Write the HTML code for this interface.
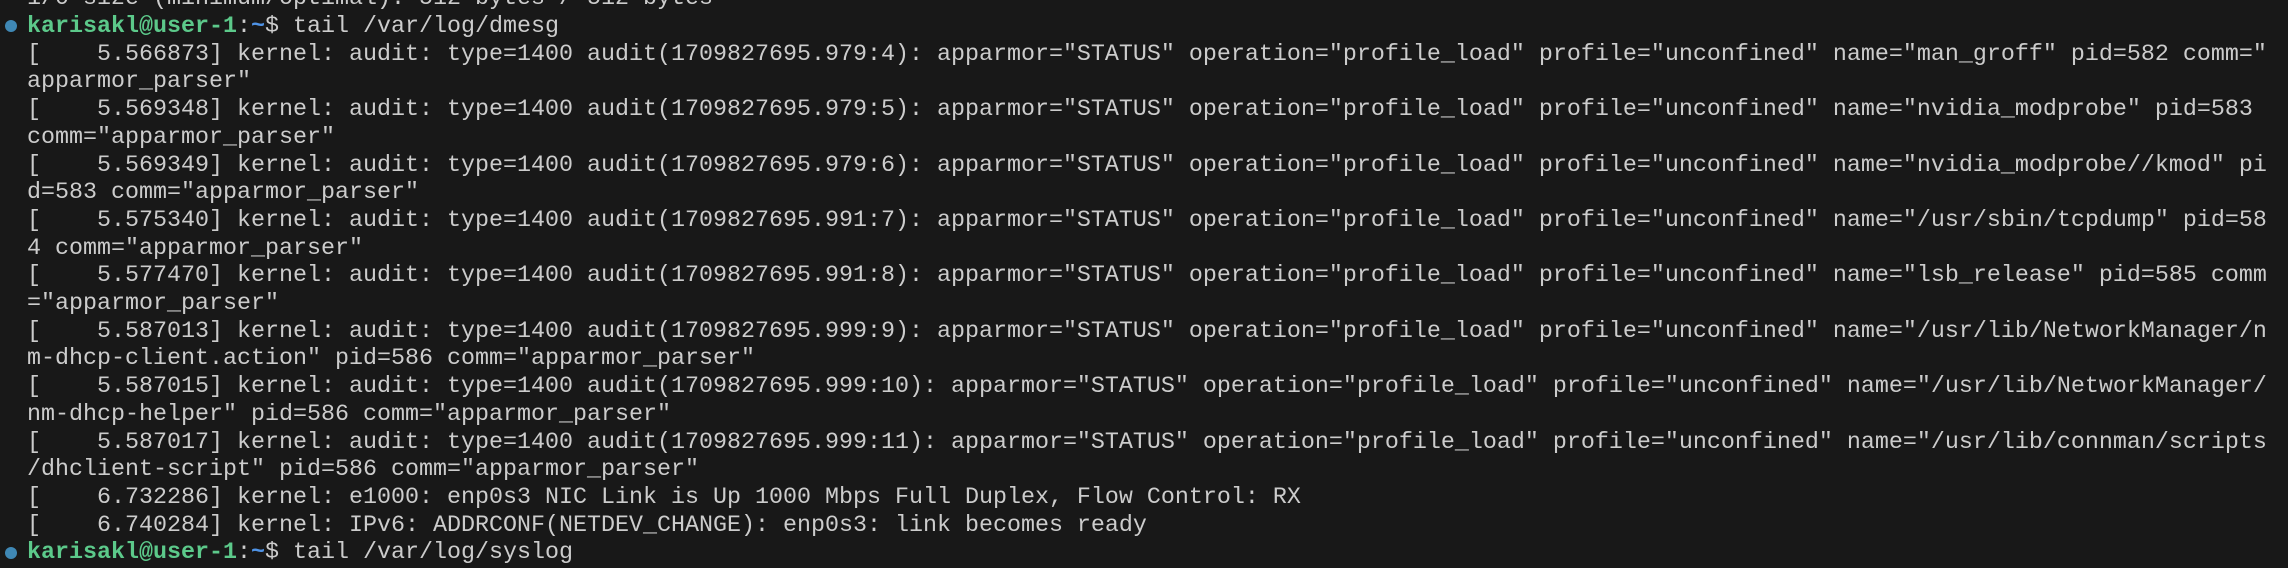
<!DOCTYPE html>
<html><head><meta charset="utf-8"><style>
html,body{margin:0;padding:0;background:#181818;width:2288px;height:554px;overflow:hidden}
.t{position:absolute;left:27px;top:-13.7px;font-family:"Liberation Mono",monospace;font-size:23.33px;line-height:27.7px;color:#cccccc;white-space:pre}
.g{color:#5cc98a;font-weight:bold}
.b{color:#4f93e6;font-weight:bold}
.dot{position:absolute;left:5px;width:12px;height:12px;border-radius:50%;background:#3f88b5}
</style></head><body>
<div class="dot" style="top:20px"></div>
<div class="dot" style="top:547px"></div>
<div class="t">1/0 size (minimum/optimal): 512 bytes / 512 bytes
<span class="g">karisakl@user-1</span>:<span class="b">~</span>$ tail /var/log/dmesg
[    5.566873] kernel: audit: type=1400 audit(1709827695.979:4): apparmor="STATUS" operation="profile_load" profile="unconfined" name="man_groff" pid=582 comm="
apparmor_parser"
[    5.569348] kernel: audit: type=1400 audit(1709827695.979:5): apparmor="STATUS" operation="profile_load" profile="unconfined" name="nvidia_modprobe" pid=583
comm="apparmor_parser"
[    5.569349] kernel: audit: type=1400 audit(1709827695.979:6): apparmor="STATUS" operation="profile_load" profile="unconfined" name="nvidia_modprobe//kmod" pi
d=583 comm="apparmor_parser"
[    5.575340] kernel: audit: type=1400 audit(1709827695.991:7): apparmor="STATUS" operation="profile_load" profile="unconfined" name="/usr/sbin/tcpdump" pid=58
4 comm="apparmor_parser"
[    5.577470] kernel: audit: type=1400 audit(1709827695.991:8): apparmor="STATUS" operation="profile_load" profile="unconfined" name="lsb_release" pid=585 comm
="apparmor_parser"
[    5.587013] kernel: audit: type=1400 audit(1709827695.999:9): apparmor="STATUS" operation="profile_load" profile="unconfined" name="/usr/lib/NetworkManager/n
m-dhcp-client.action" pid=586 comm="apparmor_parser"
[    5.587015] kernel: audit: type=1400 audit(1709827695.999:10): apparmor="STATUS" operation="profile_load" profile="unconfined" name="/usr/lib/NetworkManager/
nm-dhcp-helper" pid=586 comm="apparmor_parser"
[    5.587017] kernel: audit: type=1400 audit(1709827695.999:11): apparmor="STATUS" operation="profile_load" profile="unconfined" name="/usr/lib/connman/scripts
/dhclient-script" pid=586 comm="apparmor_parser"
[    6.732286] kernel: e1000: enp0s3 NIC Link is Up 1000 Mbps Full Duplex, Flow Control: RX
[    6.740284] kernel: IPv6: ADDRCONF(NETDEV_CHANGE): enp0s3: link becomes ready
<span class="g">karisakl@user-1</span>:<span class="b">~</span>$ tail /var/log/syslog</div>
</body></html>
